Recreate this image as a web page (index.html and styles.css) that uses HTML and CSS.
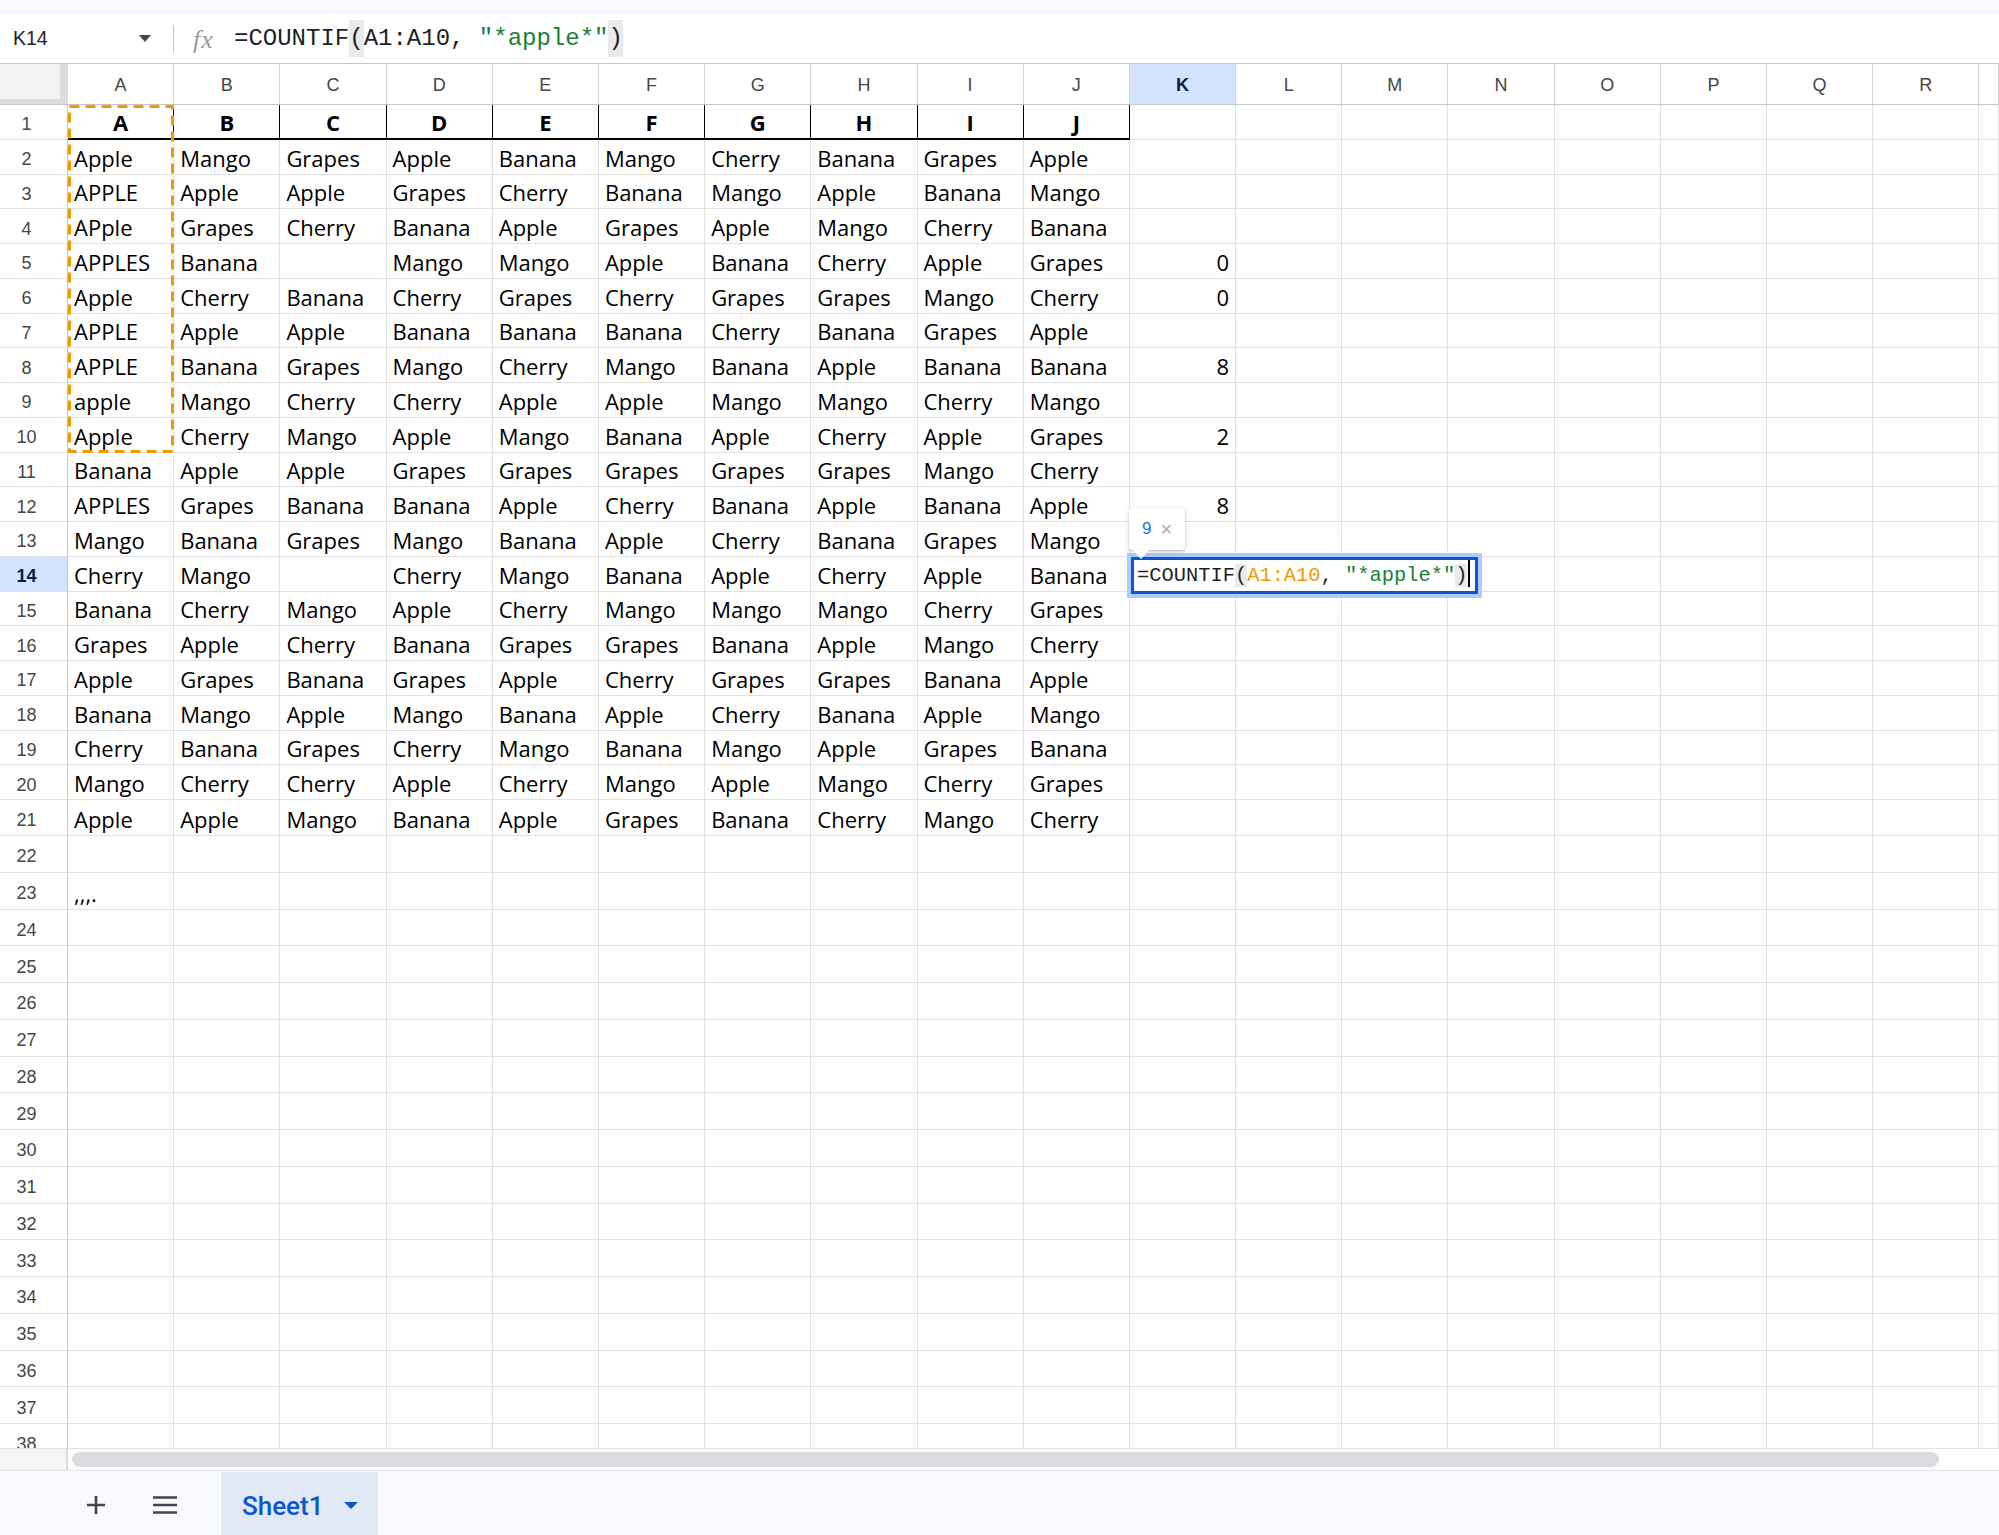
FILE: index.html
```html
<!DOCTYPE html>
<html lang="en">
<head>
<meta charset="utf-8">
<title>Sheet1</title>
<link rel="stylesheet" href="styles.css">
</head>
<body>
<div class="app">
  <div class="topstrip"></div>
  <div class="fbar">
    <div class="namebox"><span>K14</span><span class="caret"></span></div>
    <div class="divider"></div>
    <span class="fx">fx</span>
    <div class="formula">=COUNTIF<span class="paren">(</span>A1:A10, <span class="str">"*apple*"</span><span class="paren">)</span></div>
  </div>
  <div class="viewport">
    <div class="colhead">
      <span class="corner"></span><span>A</span><span>B</span><span>C</span><span>D</span><span>E</span><span>F</span><span>G</span><span>H</span><span>I</span><span>J</span><span class="sel">K</span><span>L</span><span>M</span><span>N</span><span>O</span><span>P</span><span>Q</span><span>R</span><span class="rest"></span>
    </div>
    <div class="sheet">
      <div class="row"><span class="rh">1</span><span class="hd">A</span><span class="hd">B</span><span class="hd">C</span><span class="hd">D</span><span class="hd">E</span><span class="hd">F</span><span class="hd">G</span><span class="hd">H</span><span class="hd">I</span><span class="hd">J</span><span></span><span></span><span></span><span></span><span></span><span></span><span></span><span></span><span class="rest"></span></div>
      <div class="row"><span class="rh">2</span><span>Apple</span><span>Mango</span><span>Grapes</span><span>Apple</span><span>Banana</span><span>Mango</span><span>Cherry</span><span>Banana</span><span>Grapes</span><span>Apple</span><span></span><span></span><span></span><span></span><span></span><span></span><span></span><span></span><span class="rest"></span></div>
      <div class="row"><span class="rh">3</span><span>APPLE</span><span>Apple</span><span>Apple</span><span>Grapes</span><span>Cherry</span><span>Banana</span><span>Mango</span><span>Apple</span><span>Banana</span><span>Mango</span><span></span><span></span><span></span><span></span><span></span><span></span><span></span><span></span><span class="rest"></span></div>
      <div class="row"><span class="rh">4</span><span>APple</span><span>Grapes</span><span>Cherry</span><span>Banana</span><span>Apple</span><span>Grapes</span><span>Apple</span><span>Mango</span><span>Cherry</span><span>Banana</span><span></span><span></span><span></span><span></span><span></span><span></span><span></span><span></span><span class="rest"></span></div>
      <div class="row"><span class="rh">5</span><span>APPLES</span><span>Banana</span><span></span><span>Mango</span><span>Mango</span><span>Apple</span><span>Banana</span><span>Cherry</span><span>Apple</span><span>Grapes</span><span class="n">0</span><span></span><span></span><span></span><span></span><span></span><span></span><span></span><span class="rest"></span></div>
      <div class="row"><span class="rh">6</span><span>Apple</span><span>Cherry</span><span>Banana</span><span>Cherry</span><span>Grapes</span><span>Cherry</span><span>Grapes</span><span>Grapes</span><span>Mango</span><span>Cherry</span><span class="n">0</span><span></span><span></span><span></span><span></span><span></span><span></span><span></span><span class="rest"></span></div>
      <div class="row"><span class="rh">7</span><span>APPLE</span><span>Apple</span><span>Apple</span><span>Banana</span><span>Banana</span><span>Banana</span><span>Cherry</span><span>Banana</span><span>Grapes</span><span>Apple</span><span></span><span></span><span></span><span></span><span></span><span></span><span></span><span></span><span class="rest"></span></div>
      <div class="row"><span class="rh">8</span><span>APPLE</span><span>Banana</span><span>Grapes</span><span>Mango</span><span>Cherry</span><span>Mango</span><span>Banana</span><span>Apple</span><span>Banana</span><span>Banana</span><span class="n">8</span><span></span><span></span><span></span><span></span><span></span><span></span><span></span><span class="rest"></span></div>
      <div class="row"><span class="rh">9</span><span>apple</span><span>Mango</span><span>Cherry</span><span>Cherry</span><span>Apple</span><span>Apple</span><span>Mango</span><span>Mango</span><span>Cherry</span><span>Mango</span><span></span><span></span><span></span><span></span><span></span><span></span><span></span><span></span><span class="rest"></span></div>
      <div class="row"><span class="rh">10</span><span>Apple</span><span>Cherry</span><span>Mango</span><span>Apple</span><span>Mango</span><span>Banana</span><span>Apple</span><span>Cherry</span><span>Apple</span><span>Grapes</span><span class="n">2</span><span></span><span></span><span></span><span></span><span></span><span></span><span></span><span class="rest"></span></div>
      <div class="row"><span class="rh">11</span><span>Banana</span><span>Apple</span><span>Apple</span><span>Grapes</span><span>Grapes</span><span>Grapes</span><span>Grapes</span><span>Grapes</span><span>Mango</span><span>Cherry</span><span></span><span></span><span></span><span></span><span></span><span></span><span></span><span></span><span class="rest"></span></div>
      <div class="row"><span class="rh">12</span><span>APPLES</span><span>Grapes</span><span>Banana</span><span>Banana</span><span>Apple</span><span>Cherry</span><span>Banana</span><span>Apple</span><span>Banana</span><span>Apple</span><span class="n">8</span><span></span><span></span><span></span><span></span><span></span><span></span><span></span><span class="rest"></span></div>
      <div class="row"><span class="rh">13</span><span>Mango</span><span>Banana</span><span>Grapes</span><span>Mango</span><span>Banana</span><span>Apple</span><span>Cherry</span><span>Banana</span><span>Grapes</span><span>Mango</span><span></span><span></span><span></span><span></span><span></span><span></span><span></span><span></span><span class="rest"></span></div>
      <div class="row"><span class="rh sel">14</span><span>Cherry</span><span>Mango</span><span></span><span>Cherry</span><span>Mango</span><span>Banana</span><span>Apple</span><span>Cherry</span><span>Apple</span><span>Banana</span><span></span><span></span><span></span><span></span><span></span><span></span><span></span><span></span><span class="rest"></span></div>
      <div class="row"><span class="rh">15</span><span>Banana</span><span>Cherry</span><span>Mango</span><span>Apple</span><span>Cherry</span><span>Mango</span><span>Mango</span><span>Mango</span><span>Cherry</span><span>Grapes</span><span></span><span></span><span></span><span></span><span></span><span></span><span></span><span></span><span class="rest"></span></div>
      <div class="row"><span class="rh">16</span><span>Grapes</span><span>Apple</span><span>Cherry</span><span>Banana</span><span>Grapes</span><span>Grapes</span><span>Banana</span><span>Apple</span><span>Mango</span><span>Cherry</span><span></span><span></span><span></span><span></span><span></span><span></span><span></span><span></span><span class="rest"></span></div>
      <div class="row"><span class="rh">17</span><span>Apple</span><span>Grapes</span><span>Banana</span><span>Grapes</span><span>Apple</span><span>Cherry</span><span>Grapes</span><span>Grapes</span><span>Banana</span><span>Apple</span><span></span><span></span><span></span><span></span><span></span><span></span><span></span><span></span><span class="rest"></span></div>
      <div class="row"><span class="rh">18</span><span>Banana</span><span>Mango</span><span>Apple</span><span>Mango</span><span>Banana</span><span>Apple</span><span>Cherry</span><span>Banana</span><span>Apple</span><span>Mango</span><span></span><span></span><span></span><span></span><span></span><span></span><span></span><span></span><span class="rest"></span></div>
      <div class="row"><span class="rh">19</span><span>Cherry</span><span>Banana</span><span>Grapes</span><span>Cherry</span><span>Mango</span><span>Banana</span><span>Mango</span><span>Apple</span><span>Grapes</span><span>Banana</span><span></span><span></span><span></span><span></span><span></span><span></span><span></span><span></span><span class="rest"></span></div>
      <div class="row"><span class="rh">20</span><span>Mango</span><span>Cherry</span><span>Cherry</span><span>Apple</span><span>Cherry</span><span>Mango</span><span>Apple</span><span>Mango</span><span>Cherry</span><span>Grapes</span><span></span><span></span><span></span><span></span><span></span><span></span><span></span><span></span><span class="rest"></span></div>
      <div class="row r21"><span class="rh">21</span><span>Apple</span><span>Apple</span><span>Mango</span><span>Banana</span><span>Apple</span><span>Grapes</span><span>Banana</span><span>Cherry</span><span>Mango</span><span>Cherry</span><span></span><span></span><span></span><span></span><span></span><span></span><span></span><span></span><span class="rest"></span></div>
      <div class="row tall"><span class="rh">22</span><span></span><span></span><span></span><span></span><span></span><span></span><span></span><span></span><span></span><span></span><span></span><span></span><span></span><span></span><span></span><span></span><span></span><span></span><span class="rest"></span></div>
      <div class="row tall"><span class="rh">23</span><span>,,,.</span><span></span><span></span><span></span><span></span><span></span><span></span><span></span><span></span><span></span><span></span><span></span><span></span><span></span><span></span><span></span><span></span><span></span><span class="rest"></span></div>
      <div class="row tall"><span class="rh">24</span><span></span><span></span><span></span><span></span><span></span><span></span><span></span><span></span><span></span><span></span><span></span><span></span><span></span><span></span><span></span><span></span><span></span><span></span><span class="rest"></span></div>
      <div class="row tall"><span class="rh">25</span><span></span><span></span><span></span><span></span><span></span><span></span><span></span><span></span><span></span><span></span><span></span><span></span><span></span><span></span><span></span><span></span><span></span><span></span><span class="rest"></span></div>
      <div class="row tall"><span class="rh">26</span><span></span><span></span><span></span><span></span><span></span><span></span><span></span><span></span><span></span><span></span><span></span><span></span><span></span><span></span><span></span><span></span><span></span><span></span><span class="rest"></span></div>
      <div class="row tall"><span class="rh">27</span><span></span><span></span><span></span><span></span><span></span><span></span><span></span><span></span><span></span><span></span><span></span><span></span><span></span><span></span><span></span><span></span><span></span><span></span><span class="rest"></span></div>
      <div class="row tall"><span class="rh">28</span><span></span><span></span><span></span><span></span><span></span><span></span><span></span><span></span><span></span><span></span><span></span><span></span><span></span><span></span><span></span><span></span><span></span><span></span><span class="rest"></span></div>
      <div class="row tall"><span class="rh">29</span><span></span><span></span><span></span><span></span><span></span><span></span><span></span><span></span><span></span><span></span><span></span><span></span><span></span><span></span><span></span><span></span><span></span><span></span><span class="rest"></span></div>
      <div class="row tall"><span class="rh">30</span><span></span><span></span><span></span><span></span><span></span><span></span><span></span><span></span><span></span><span></span><span></span><span></span><span></span><span></span><span></span><span></span><span></span><span></span><span class="rest"></span></div>
      <div class="row tall"><span class="rh">31</span><span></span><span></span><span></span><span></span><span></span><span></span><span></span><span></span><span></span><span></span><span></span><span></span><span></span><span></span><span></span><span></span><span></span><span></span><span class="rest"></span></div>
      <div class="row tall"><span class="rh">32</span><span></span><span></span><span></span><span></span><span></span><span></span><span></span><span></span><span></span><span></span><span></span><span></span><span></span><span></span><span></span><span></span><span></span><span></span><span class="rest"></span></div>
      <div class="row tall"><span class="rh">33</span><span></span><span></span><span></span><span></span><span></span><span></span><span></span><span></span><span></span><span></span><span></span><span></span><span></span><span></span><span></span><span></span><span></span><span></span><span class="rest"></span></div>
      <div class="row tall"><span class="rh">34</span><span></span><span></span><span></span><span></span><span></span><span></span><span></span><span></span><span></span><span></span><span></span><span></span><span></span><span></span><span></span><span></span><span></span><span></span><span class="rest"></span></div>
      <div class="row tall"><span class="rh">35</span><span></span><span></span><span></span><span></span><span></span><span></span><span></span><span></span><span></span><span></span><span></span><span></span><span></span><span></span><span></span><span></span><span></span><span></span><span class="rest"></span></div>
      <div class="row tall"><span class="rh">36</span><span></span><span></span><span></span><span></span><span></span><span></span><span></span><span></span><span></span><span></span><span></span><span></span><span></span><span></span><span></span><span></span><span></span><span></span><span class="rest"></span></div>
      <div class="row tall"><span class="rh">37</span><span></span><span></span><span></span><span></span><span></span><span></span><span></span><span></span><span></span><span></span><span></span><span></span><span></span><span></span><span></span><span></span><span></span><span></span><span class="rest"></span></div>
      <div class="row tall"><span class="rh">38</span><span></span><span></span><span></span><span></span><span></span><span></span><span></span><span></span><span></span><span></span><span></span><span></span><span></span><span></span><span></span><span></span><span></span><span></span><span class="rest"></span></div>

      <svg class="marquee" width="106" height="348" viewBox="0 0 106 348"><rect x="1.5" y="1.5" width="103" height="345" fill="none" stroke="#f29900" stroke-width="3" stroke-dasharray="10 6"/></svg>
      <div class="editor">=COUNTIF<span class="paren">(</span><span class="ref">A1:A10</span>, <span class="str">"*apple*"</span><span class="paren">)</span><span class="cursor"></span></div>
      <div class="tip"><span class="tip-val">9</span><span class="tip-x">×</span></div>
    </div>
  </div>
  <div class="hscroll"><div class="hs-left"></div><div class="hs-track"><div class="thumb"></div></div></div>
  <div class="tabs">
    <div class="tb-btn"><svg width="20" height="20" viewBox="0 0 20 20"><path d="M10 1v18M1 10h18" stroke="#444746" stroke-width="2.6" fill="none"/></svg></div>
    <div class="tb-btn menu"><svg width="24" height="18" viewBox="0 0 24 18"><path d="M0 1.5h24M0 9h24M0 16.5h24" stroke="#444746" stroke-width="2.6" fill="none"/></svg></div>
    <div class="tab"><span class="tab-name">Sheet1</span><span class="tab-caret"></span></div>
  </div>
</div>
</body>
</html>
```

FILE: styles.css
```css
* { box-sizing: border-box; }

body {
  margin: 0;
  background: #fff;
}

.app {
  width: 1999px;
  height: 1535px;
  overflow: hidden;
  display: flex;
  flex-direction: column;
  font-family: "Liberation Sans", Arial, sans-serif;
  color: #1f1f1f;
}

.topstrip {
  flex: none;
  height: 14px;
  background: #f8fafd;
}

/* formula bar */
.fbar {
  flex: none;
  height: 50px;
  display: flex;
  align-items: center;
  background: #fff;
  border-bottom: 1px solid #c4c7c5;
}

.namebox {
  width: 173px;
  height: 100%;
  display: flex;
  align-items: center;
  justify-content: space-between;
  padding: 0 22px 0 13px;
  font-size: 19.5px;
  color: #1f1f1f;
}

.caret {
  width: 0;
  height: 0;
  border-left: 6px solid transparent;
  border-right: 6px solid transparent;
  border-top: 7px solid #444746;
}

.divider {
  width: 1px;
  height: 28px;
  background: #c4c7c5;
}

.fx {
  margin-left: 19px;
  width: 24px;
  padding-top: 2px;
  font: italic 26px "Liberation Serif", serif;
  letter-spacing: 1px;
  color: #999;
}

.formula {
  margin-left: 17px;
  font: 24px "Liberation Mono", monospace;
  color: #1f1f1f;
  white-space: pre;
}

.formula .paren {
  background: #e8eaed;
  padding: 5px 0;
}

.str { color: #188038; }
.ref { color: #f29900; }

/* grid */
.viewport {
  flex: none;
  height: 1384px;
  overflow: hidden;
}

.colhead {
  display: flex;
  height: 41px;
  border-bottom: 1px solid #c4c7c5;
}

.colhead span {
  flex: none;
  width: 106.2px;
  display: flex;
  align-items: center;
  justify-content: center;
  padding-top: 2px;
  border-right: 1px solid #d3d3d3;
  font-size: 18px;
  color: #444746;
}

.colhead .corner {
  width: 68px;
  background: #f3f3f3;
  border-right: 8px solid #dcdcdc;
  border-bottom: 5px solid #dcdcdc;
}

.colhead .sel {
  background: #d3e3fd;
  color: #041e49;
  font-weight: bold;
}

.colhead .rest,
.row .rest {
  flex: 1 1 auto;
  width: auto;
  min-width: 0;
}

.sheet {
  position: relative;
}

.row {
  display: flex;
  height: 34.75px;
}

.row.r21 { height: 36px; }
.row.tall { height: 36.75px; }

.row span {
  flex: none;
  width: 106.2px;
  display: flex;
  align-items: flex-end;
  padding: 0 6px 1px;
  border-right: 1px solid #e2e2e2;
  border-bottom: 1px solid #e2e2e2;
  font: 22px/30px "Open Sans", sans-serif;
  color: #000;
  white-space: nowrap;
  overflow: hidden;
}

.row .rh {
  width: 68px;
  align-items: center;
  justify-content: center;
  padding: 5px 14px 0 0;
  border-right-color: #c4c7c5;
  font: 18px/20px "Liberation Sans", Arial, sans-serif;
  color: #444746;
}

.row .rh.sel {
  background: #d3e3fd;
  color: #041e49;
  font-weight: bold;
}

.row .hd {
  justify-content: center;
  font-weight: 700;
  border-right: 1px solid #000;
  border-bottom: 2px solid #000;
}

.row .n {
  justify-content: flex-end;
}

/* overlays */
.marquee {
  position: absolute;
  left: 68px;
  top: 0;
}

.editor {
  position: absolute;
  left: 1131px;
  top: 452px;
  width: 347px;
  height: 37px;
  padding-left: 3px;
  background: #fff;
  border: 3px solid #0b57d0;
  box-shadow: 0 0 0 4px #aecbfa;
  font: 20.4px/31px "Liberation Mono", monospace;
  color: #1f1f1f;
  white-space: pre;
}

.editor .paren {
  background: #e8eaed;
}

.cursor {
  display: inline-block;
  width: 2px;
  height: 27px;
  margin-left: 1px;
  background: #000;
  vertical-align: -6px;
}

.tip {
  position: absolute;
  left: 1129px;
  top: 403px;
  width: 56px;
  height: 42px;
  display: flex;
  align-items: center;
  padding-left: 13px;
  background: #fff;
  border-radius: 3px;
  box-shadow: 0 1px 2px rgba(60, 64, 67, .3), 0 2px 6px rgba(60, 64, 67, .15);
  font-family: "Liberation Sans", Arial, sans-serif;
}

.tip::after {
  content: "";
  position: absolute;
  left: 4px;
  bottom: -9px;
  border-left: 8px solid transparent;
  border-right: 8px solid transparent;
  border-top: 9px solid #fff;
}

.tip-val {
  font-size: 17px;
  color: #1a73e8;
}

.tip-x {
  margin-left: 9px;
  font-size: 20px;
  color: #a8abaf;
}

/* horizontal scrollbar */
.hscroll {
  flex: none;
  height: 22px;
  display: flex;
  border-top: 1px solid #e2e2e2;
}

.hs-left {
  width: 68px;
  background: #f5f5f5;
  border-right: 2px solid #dcdcdc;
}

.hs-track {
  flex: 1;
  padding: 3px 60px 3px 4px;
  background: #fff;
}

.thumb {
  height: 15px;
  border-radius: 8px;
  background: #dadce0;
}

/* sheet tabs */
.tabs {
  flex: none;
  height: 65px;
  display: flex;
  align-items: stretch;
  padding-left: 76px;
  background: #f8fafd;
  border-top: 1px solid #e3e3e3;
}

.tb-btn {
  width: 40px;
  display: flex;
  align-items: center;
  justify-content: center;
  padding-top: 4px;
}

.tb-btn.menu {
  margin-left: 29px;
}

.tab {
  margin-left: 36px;
  margin-top: 1px;
  width: 157px;
  display: flex;
  align-items: center;
  justify-content: space-between;
  padding: 4px 20px 0 21px;
  background: #e1e9f7;
}

.tab-name {
  font: 500 26px Roboto, "Liberation Sans", sans-serif;
  color: #0b57d0;
}

.tab-caret {
  width: 0;
  height: 0;
  border-left: 7px solid transparent;
  border-right: 7px solid transparent;
  border-top: 7px solid #0b57d0;
}
```
